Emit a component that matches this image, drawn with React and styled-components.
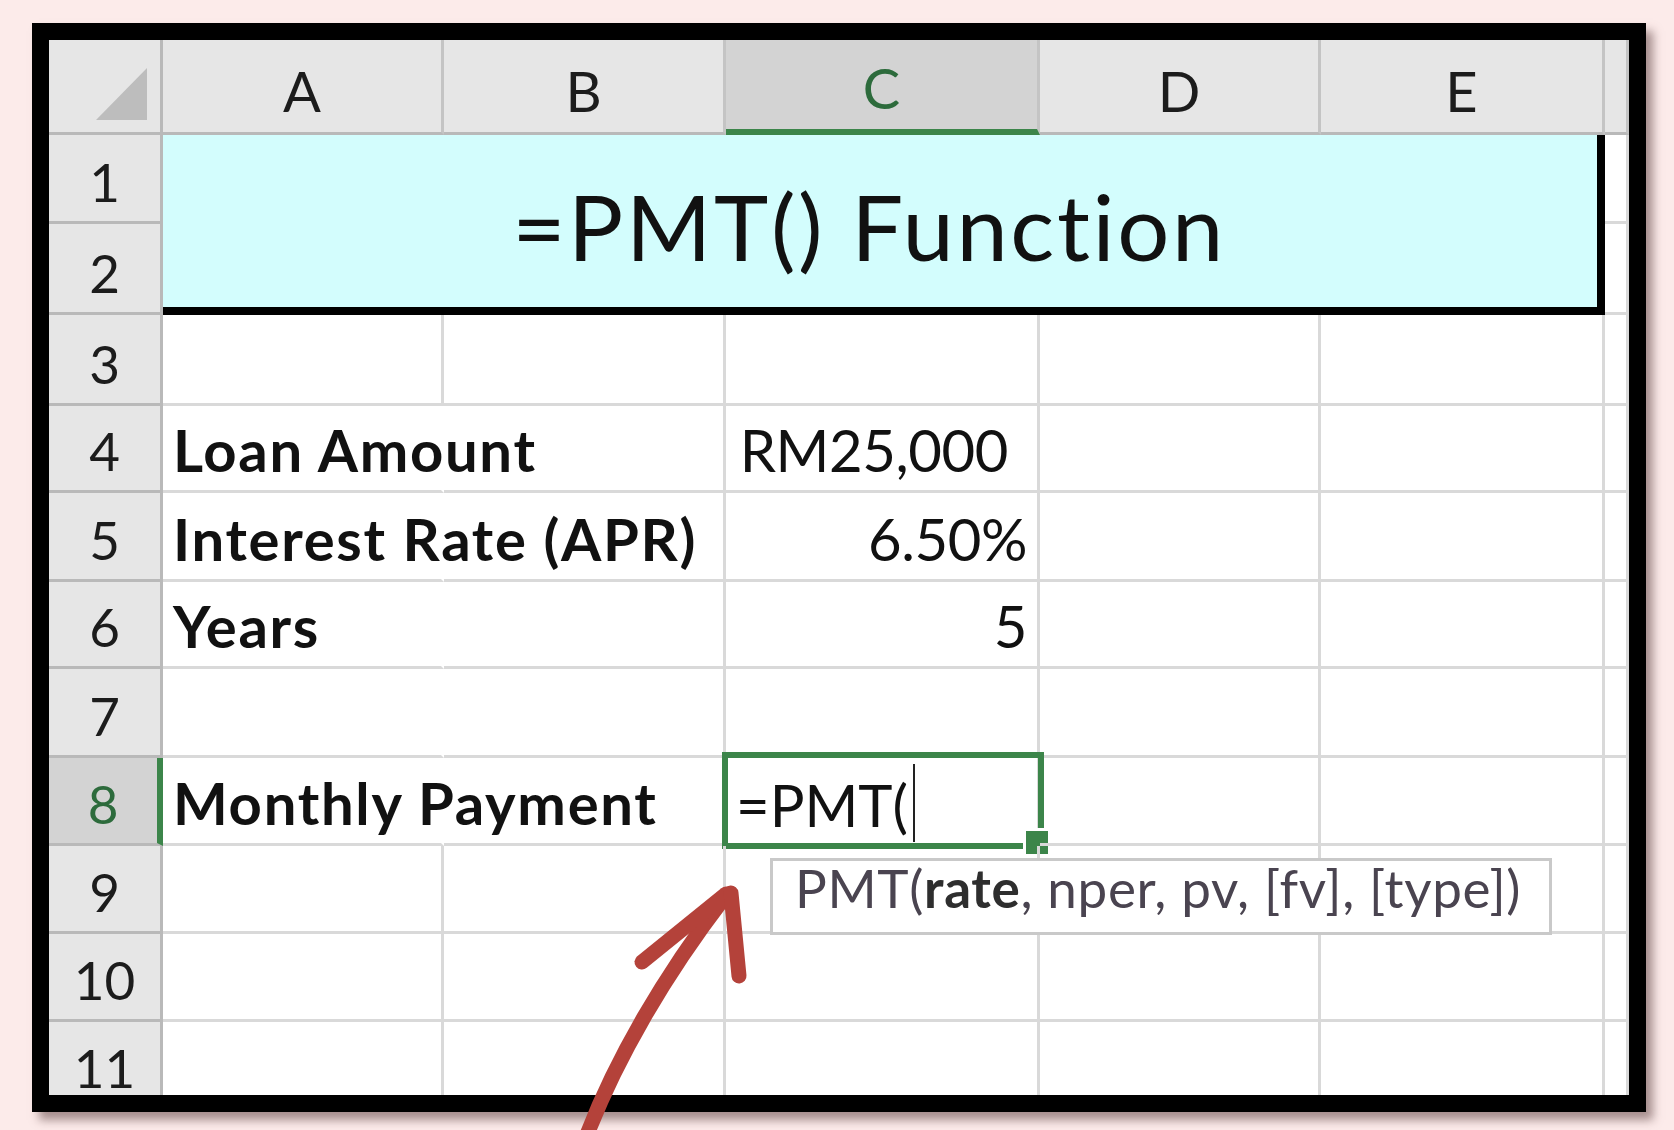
import React from 'react';
import styled, { createGlobalStyle } from 'styled-components';

const GREEN = '#3c854a';
const GRID = '#d9d9d9';
const HEAD_LINE = '#b9b9b9';
const FONT = 'Lato, "Open Sans", "Liberation Sans", sans-serif';

const GlobalStyle = createGlobalStyle`
  html, body {
    margin: 0;
    padding: 0;
    background: #fcebea;
  }
  body {
    font-family: ${FONT};
    font-variant-ligatures: none;
  }
`;

const Page = styled.div`
  position: relative;
  width: 1674px;
  height: 1130px;
  overflow: hidden;
  padding: 23px 0 0 32px;
  box-sizing: border-box;
  background: #fcebea;
`;

const Frame = styled.div`
  width: 1614px;
  height: 1089px;
  box-sizing: border-box;
  border: 17px solid #000;
  box-shadow: 7px 8px 9px rgba(95, 65, 65, 0.55);
  background: #fff;
`;

const Sheet = styled.div`
  display: grid;
  grid-template-columns: 114px 281px 282px 314px 281px 284px 1fr;
  grid-template-rows: 95px 89px 91px 91px 87px 89px 87px 89px 88px 88px 88px 88px;
  height: 100%;
  overflow: hidden;
  background: #fff;
`;

const CornerCell = styled.div`
  display: flex;
  align-items: flex-end;
  justify-content: flex-end;
  padding: 0 13px 12px 0;
  background: #e6e6e6;
  border-right: 3px solid ${HEAD_LINE};
  border-bottom: 3px solid ${HEAD_LINE};
`;

const CornerTriangle = styled.div`
  width: 0;
  height: 0;
  border-left: 51px solid transparent;
  border-bottom: 52px solid #bdbdbd;
`;

const ColHeader = styled.div`
  display: flex;
  align-items: flex-end;
  justify-content: center;
  padding-bottom: 8px;
  background: ${({ $active }) => ($active ? '#d3d3d3' : '#e6e6e6')};
  border-right: 3px solid #c4c4c4;
  border-bottom: ${({ $active }) =>
    $active ? `6px solid ${GREEN}` : `3px solid ${HEAD_LINE}`};
  color: ${({ $active }) => ($active ? '#2d6b3c' : '#1c1c1c')};
  font-size: 56px;
  line-height: 1.2;
`;

const RowHeader = styled.div`
  display: flex;
  align-items: flex-end;
  justify-content: center;
  padding-bottom: 7px;
  background: ${({ $active }) => ($active ? '#d3d3d3' : '#e6e6e6')};
  border-right: ${({ $active }) =>
    $active ? `6px solid ${GREEN}` : `3px solid ${HEAD_LINE}`};
  border-bottom: 3px solid ${HEAD_LINE};
  color: ${({ $active }) => ($active ? '#2d6b3c' : '#1c1c1c')};
  font-size: 53px;
  line-height: 1.2;
`;

const TitleCell = styled.div`
  grid-column: 2 / span 5;
  grid-row: 2 / span 2;
  display: flex;
  align-items: center;
  justify-content: center;
  padding: 11px 22px 0 0;
  background: #d3fdfd;
  border-right: 8px solid #000;
  border-bottom: 8px solid #000;
  color: #111;
  font-size: 92px;
  letter-spacing: 2.6px;
  line-height: 1.2;
  white-space: nowrap;
`;

const Cell = styled.div`
  position: relative;
  min-width: 0;
  display: flex;
  align-items: flex-end;
  justify-content: ${({ $align }) => ($align === 'right' ? 'flex-end' : 'flex-start')};
  padding: 0 ${({ $padRight }) => $padRight}px 5px 10px;
  border-right: 3px solid ${({ $spill }) => ($spill ? 'transparent' : GRID)};
  border-bottom: 3px solid ${GRID};
  color: #111;
  font-size: 58px;
  font-weight: ${({ $bold }) => ($bold ? 700 : 400)};
  letter-spacing: ${({ $bold }) => ($bold ? '1.7px' : '-0.4px')};
  line-height: 1.2;
  white-space: nowrap;
`;

const ActiveCell = styled(Cell)`
  padding: 0 0 3px 10px;
  letter-spacing: 0;
`;

const Selection = styled.div`
  position: absolute;
  top: -6px;
  left: -4px;
  right: -7px;
  bottom: -6px;
  border: 6px solid ${GREEN};
  pointer-events: none;
`;

const FillHandle = styled.div`
  position: absolute;
  right: -11px;
  bottom: -11px;
  width: 22px;
  height: 23px;
  background: ${GREEN};
  box-shadow: 0 0 0 3px #fff;
`;

const Caret = styled.span`
  display: inline-block;
  width: 2px;
  height: 78px;
  margin: 0 0 -2px 5px;
  background: #222;
  vertical-align: bottom;
`;

const FormulaTip = styled.div`
  position: absolute;
  left: 44px;
  top: 100px;
  width: 782px;
  height: 77px;
  box-sizing: border-box;
  display: flex;
  align-items: center;
  padding: 0 0 18px 22px;
  background: #fff;
  border: 3px solid #c9c9c9;
  color: #4a4450;
  font-size: 53px;
  font-weight: 400;
  letter-spacing: 0.65px;
  line-height: 1.2;
  z-index: 2;

  b {
    color: #2e2e2e;
    font-weight: 700;
  }
`;

const Arrow = styled.svg`
  position: absolute;
  left: 560px;
  top: 870px;
  width: 200px;
  height: 260px;
  overflow: visible;
  pointer-events: none;
  z-index: 5;
`;

const COLS = ['A', 'B', 'C', 'D', 'E'];

// cells that hold something, keyed by row then column
const DATA = {
  4: {
    A: { text: 'Loan Amount', bold: true, spill: true },
    C: { text: 'RM25,000', align: 'right', padRight: 29 },
  },
  5: {
    A: { text: 'Interest Rate (APR)', bold: true, spill: true },
    C: { text: '6.50%', align: 'right', padRight: 10 },
  },
  6: {
    A: { text: 'Years', bold: true, spill: true },
    C: { text: '5', align: 'right', padRight: 10 },
  },
  7: { A: { spill: true } },
  8: {
    A: { text: 'Monthly Payment', bold: true, spill: true },
    C: { active: true },
  },
};

const FormulaCell = () => (
  <ActiveCell>
    <span>
      =PMT(
      <Caret />
    </span>
    <Selection />
    <FillHandle />
    <FormulaTip>
      <span>
        PMT(<b>rate</b>, nper, pv, [fv], [type])
      </span>
    </FormulaTip>
  </ActiveCell>
);

const DataRow = ({ n }) => {
  const row = DATA[n] || {};
  return (
    <>
      <RowHeader $active={n === 8}>{n}</RowHeader>
      {COLS.map((col) => {
        const c = row[col] || {};
        if (c.active) return <FormulaCell key={col} />;
        return (
          <Cell
            key={col}
            $bold={c.bold}
            $spill={c.spill}
            $align={c.align}
            $padRight={c.padRight || 0}
          >
            {c.text}
          </Cell>
        );
      })}
      <Cell $padRight={0} />
    </>
  );
};

export default function App() {
  return (
    <Page>
      <GlobalStyle />
      <Frame>
        <Sheet>
          <CornerCell>
            <CornerTriangle />
          </CornerCell>
          {COLS.map((col) => (
            <ColHeader key={col} $active={col === 'C'}>
              {col}
            </ColHeader>
          ))}
          <ColHeader />

          <RowHeader>1</RowHeader>
          <TitleCell>=PMT() Function</TitleCell>
          <Cell $padRight={0} />
          <RowHeader>2</RowHeader>
          <Cell $padRight={0} />

          {[3, 4, 5, 6, 7, 8, 9, 10, 11].map((n) => (
            <DataRow key={n} n={n} />
          ))}
        </Sheet>
      </Frame>

      <Arrow viewBox="560 870 200 260">
        <g
          fill="none"
          stroke="#b4423a"
          strokeWidth="15"
          strokeLinecap="round"
          strokeLinejoin="round"
        >
          <path d="M585 1140 C615 1060 665 975 724 898" />
          <path d="M642 962 L726 894" />
          <path d="M731 893 L739 976" />
        </g>
      </Arrow>
    </Page>
  );
}
